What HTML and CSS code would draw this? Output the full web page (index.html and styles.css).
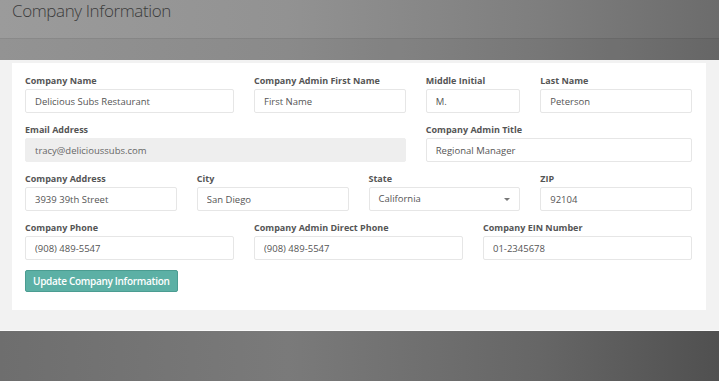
FILE: index.html
```html
<!DOCTYPE html>
<html lang="en">
  <head>
    <meta charset="UTF-8" />
    <meta name="viewport" content="width=device-width, initial-scale=1.0" />
    <title>Company Information</title>
    <link rel="stylesheet" href="styles.css">
  </head>
  <body>
    <div class="page-header">
      <h1 class="page-title">Company Information</h1>
    </div>

    <div class="panel">
      <div class="card">
        <form class="company-form">
          <div class="form-group span-4">
            <label>Company Name</label>
            <input type="text" value="Delicious Subs Restaurant" />
          </div>
          <div class="form-group span-3">
            <label>Company Admin First Name</label>
            <input type="text" value="First Name" />
          </div>
          <div class="form-group span-2">
            <label>Middle Initial</label>
            <input type="text" value="M." />
          </div>
          <div class="form-group span-3">
            <label>Last Name</label>
            <input type="text" value="Peterson" />
          </div>

          <div class="form-group span-7">
            <label>Email Address</label>
            <input type="text" value="tracy@delicioussubs.com" class="disabled" disabled />
          </div>
          <div class="form-group span-5">
            <label>Company Admin Title</label>
            <input type="text" value="Regional Manager" />
          </div>

          <div class="form-group span-3">
            <label>Company Address</label>
            <input type="text" value="3939 39th Street" />
          </div>
          <div class="form-group span-3">
            <label>City</label>
            <input type="text" value="San Diego" />
          </div>
          <div class="form-group span-3">
            <label>State</label>
            <div class="select">California<span class="caret"></span></div>
          </div>
          <div class="form-group span-3">
            <label>ZIP</label>
            <input type="text" value="92104" />
          </div>

          <div class="form-group span-4">
            <label>Company Phone</label>
            <input type="text" value="(908) 489-5547" />
          </div>
          <div class="form-group span-4">
            <label>Company Admin Direct Phone</label>
            <input type="text" value="(908) 489-5547" />
          </div>
          <div class="form-group span-4">
            <label>Company EIN Number</label>
            <input type="text" value="01-2345678" />
          </div>

          <div class="actions span-12">
            <button type="submit" class="btn">Update Company Information</button>
          </div>
        </form>
      </div>
    </div>

    <div class="backdrop"></div>
  </body>
</html>
```

FILE: styles.css
```css
body {
  font-family: "Open Sans", Arial, sans-serif;
  margin: 0;
  padding: 0;
  width: 719px;
  height: 381px;
  overflow: hidden;
  background-color: #6a6a6a;
}
.page-header {
  height: 60px;
  box-sizing: border-box;
  background: linear-gradient(to right, #9b9b9b 0%, #929292 40%, #7e7e7e 75%, #6c6c6c 100%);
}
.page-header::after {
  content: "";
  display: block;
  height: 21px;
  border-top: 1px solid rgba(0, 0, 0, 0.06);
  background: rgba(0, 0, 0, 0.05);
}
.page-title {
  margin: 0;
  padding: 0 0 0 12px;
  height: 38px;
  font-size: 17px;
  font-weight: 300;
  line-height: 22px;
  color: #3b3b3b;
  letter-spacing: -0.4px;
}
.panel {
  background: #f2f2f2;
  padding: 3px 13px 20px 12px;
  border-bottom: 1px solid #fafafa;
}
.card {
  background: white;
  padding: 11px 14px 18px 13px;
}
.company-form {
  display: grid;
  grid-template-columns: repeat(12, 1fr);
  column-gap: 20px;
}
.span-2 { grid-column: span 2; }
.span-3 { grid-column: span 3; }
.span-4 { grid-column: span 4; }
.span-5 { grid-column: span 5; }
.span-7 { grid-column: span 7; }
.span-12 { grid-column: span 12; }
.form-group {
  margin-bottom: 10px;
}
.form-group label {
  display: block;
  font-size: 9px;
  font-weight: 700;
  line-height: 13px;
  color: #555;
  margin-bottom: 2px;
  white-space: nowrap;
}
.form-group input,
.select {
  display: block;
  width: 100%;
  height: 24px;
  box-sizing: border-box;
  padding: 0 9px;
  border: 1px solid #e6e6e6;
  border-radius: 2px;
  font-family: "Open Sans", Arial, sans-serif;
  font-size: 9.5px;
  line-height: 22px;
  color: #555;
  background: white;
  margin: 0;
}
.form-group input.disabled {
  background: #eeeeee;
  border-color: #eeeeee;
  color: #666;
}
.select {
  position: relative;
}
.caret {
  position: absolute;
  right: 9px;
  top: 10px;
  width: 0;
  height: 0;
  border-left: 3px solid transparent;
  border-right: 3px solid transparent;
  border-top: 3px solid #777;
}
.actions {
  display: flex;
}
.btn {
  height: 22px;
  padding: 0 7px;
  background-color: #5cb0a5;
  border: 1px solid #4b9c91;
  border-radius: 2px;
  color: white;
  font-family: "Open Sans", Arial, sans-serif;
  font-size: 10px;
  font-weight: 600;
  letter-spacing: -0.3px;
  cursor: pointer;
}
.backdrop {
  height: 50px;
  background: linear-gradient(to right, #6e6e6e 0%, #7a7a7a 40%, #666 75%, #505050 100%);
}
```
